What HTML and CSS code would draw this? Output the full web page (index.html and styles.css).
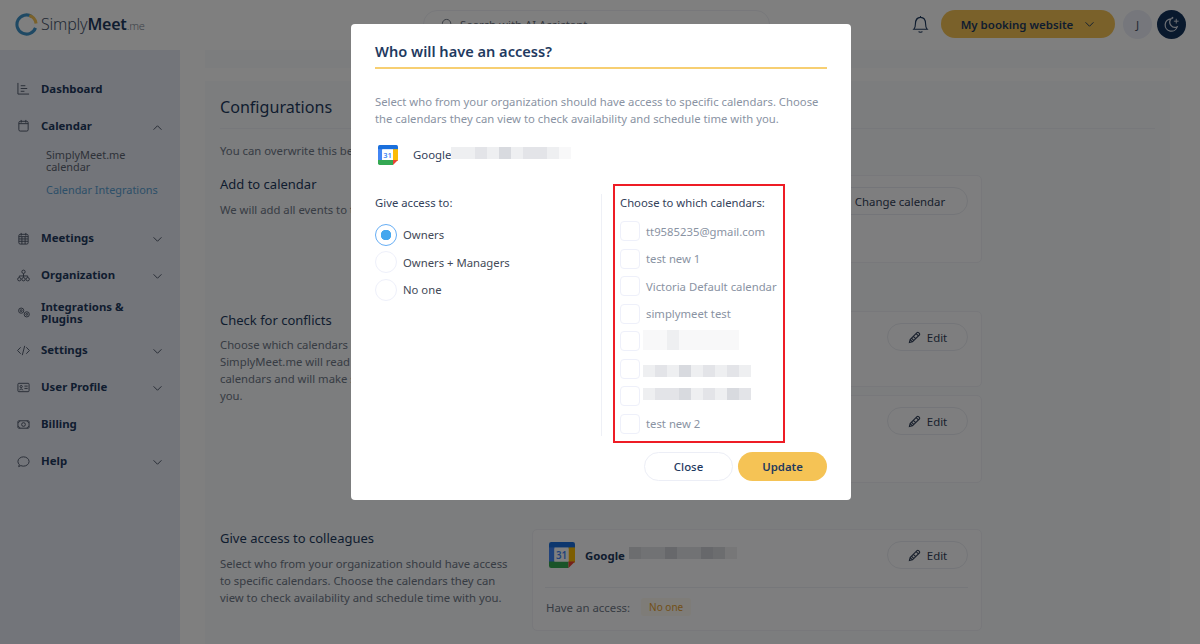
FILE: index.html
```html
<!DOCTYPE html>
<html>
<head>
    <title>SimplyMeet.me</title>
    <meta name="viewport" content="width=device-width, initial-scale=1.0">
    <link rel="stylesheet" href="styles.css">
</head>
<body>
    <svg class="sprite" width="0" height="0">
        <defs>
            <symbol id="gcal" viewBox="0 0 24 24">
                <path d="M2 0h20a2 2 0 0 1 2 2v4H0V2a2 2 0 0 1 2-2z" fill="#1a6fdc"/>
                <rect x="0" y="5" width="5" height="14" fill="#4285f4"/>
                <rect x="18" y="5" width="6" height="14" fill="#fbbc04"/>
                <path d="M0 18h18v6H2a2 2 0 0 1-2-2z" fill="#34a853"/>
                <path d="M18 18h6l-6 6z" fill="#ea4335"/>
                <rect x="5" y="5" width="13" height="13" fill="#fff"/>
                <text x="11.5" y="15.5" text-anchor="middle" class="gcal-day">31</text>
            </symbol>
            <symbol id="chev-down" viewBox="0 0 12 8">
                <path d="M1.5 1.5 6 6l4.5-4.5" fill="none" stroke="currentColor" stroke-width="1.1"/>
            </symbol>
            <symbol id="chev-up" viewBox="0 0 12 8">
                <path d="M1.5 6.5 6 2l4.5 4.5" fill="none" stroke="currentColor" stroke-width="1.1"/>
            </symbol>
            <symbol id="pencil" viewBox="0 0 14 14">
                <path d="M1.500 12.500l.8-3.300 7.400-7.400a1.200 1.200 0 0 1 1.700 0l.8.8a1.200 1.200 0 0 1 0 1.700l-7.400 7.400zM8.800 2.800l2.400 2.400M2.300 9.200l2.500 2.500M4 8l2 2M6 6l2 2" fill="none" stroke="currentColor" stroke-width="1.200"/>
            </symbol>
        </defs>
    </svg>

    <header class="topbar">
        <div class="logo">
            <svg class="logo-mark" viewBox="0 0 24 24" width="23" height="23">
                <path d="M17.500 3.600A10 10 0 1 0 21.400 15.500" fill="none" stroke="#3f93c9" stroke-width="3.200"/>
                <path d="M15 2.600A10 10 0 0 1 22 11" fill="none" stroke="#f5c355" stroke-width="3.200"/>
            </svg>
            <span class="logo-text">Simply<b>Meet</b><small>.me</small></span>
        </div>
        <div class="search">
            <svg viewBox="0 0 14 14" width="13" height="13"><circle cx="6" cy="6" r="4.500" fill="none" stroke="currentColor"/><path d="M9.500 9.500 13 13" stroke="currentColor"/></svg>
            Search with AI Assistant
        </div>
        <div class="topbar-right">
            <svg class="bell" viewBox="0 0 18 20" width="17" height="19">
                <path d="M2 15c1.300-1.200 1.600-2.500 1.600-5.500C3.600 5.500 5.500 2.500 9 2.500s5.400 3 5.400 7c0 3 .3 4.300 1.600 5.500zM9 1v1.500M7 17.500c.5 1 3.500 1 4 0" fill="none" stroke="currentColor" stroke-width="1.200"/>
            </svg>
            <button class="site-btn">My booking website
                <svg width="11" height="7"><use href="#chev-down"/></svg>
            </button>
            <span class="avatar">J</span>
            <span class="moon">
                <svg viewBox="0 0 20 20" width="19" height="19">
                    <path d="M9.500 4a6.500 6.500 0 1 0 6.500 8.500A5.500 5.500 0 0 1 9.500 4z" fill="none" stroke="#d8dde6" stroke-width="1.300"/>
                    <path d="M15 4v5M12.500 6.500h5M11 2v2M10 3h2" stroke="#d8dde6" stroke-width="1"/>
                </svg>
            </span>
        </div>
    </header>

    <div class="layout">
        <nav class="sidebar">
            <a class="nav-item">
                <svg class="nav-icon" viewBox="0 0 14 14"><path d="M1 1v12h12M4 4h5M4 7h7M4 10h4"/></svg>
                <span>Dashboard</span>
            </a>
            <a class="nav-item">
                <svg class="nav-icon" viewBox="0 0 14 14"><rect x="2" y="2.500" width="10" height="10.500" rx="1.500"/><path d="M4.500 1v3M9.500 1v3M2 5h10"/></svg>
                <span>Calendar</span>
                <svg class="chev" width="11" height="7"><use href="#chev-up"/></svg>
            </a>
            <div class="subnav">
                <a>SimplyMeet.me calendar</a>
                <a class="active">Calendar Integrations</a>
            </div>
            <a class="nav-item">
                <svg class="nav-icon" viewBox="0 0 14 14"><rect x="2" y="2.500" width="10" height="10.500" rx="1.500"/><path d="M4.500 1v3M9.500 1v3M2 5h10M2 7.500h10M2 10h10M5.300 5v8M8.700 5v8"/></svg>
                <span>Meetings</span>
                <svg class="chev" width="11" height="7"><use href="#chev-down"/></svg>
            </a>
            <a class="nav-item">
                <svg class="nav-icon" viewBox="0 0 14 14"><circle cx="7" cy="3" r="1.800"/><circle cx="2.500" cy="11" r="1.800"/><circle cx="7" cy="11" r="1.800"/><circle cx="11.500" cy="11" r="1.800"/><path d="M7 5v4M2.500 9V7.500h9V9"/></svg>
                <span>Organization</span>
                <svg class="chev" width="11" height="7"><use href="#chev-down"/></svg>
            </a>
            <a class="nav-item nav-item-tall">
                <svg class="nav-icon" viewBox="0 0 14 14"><circle cx="4.500" cy="5" r="2.800"/><circle cx="4.500" cy="5" r="1"/><circle cx="10.500" cy="9" r="2.800"/><circle cx="10.500" cy="9" r="1"/></svg>
                <span>Integrations &amp; Plugins</span>
            </a>
            <a class="nav-item">
                <svg class="nav-icon" viewBox="0 0 14 14"><path d="M4 3.500.6 7 4 10.500M10 3.500 13.400 7 10 10.500M8.300 2 5.700 12"/></svg>
                <span>Settings</span>
                <svg class="chev" width="11" height="7"><use href="#chev-down"/></svg>
            </a>
            <a class="nav-item">
                <svg class="nav-icon" viewBox="0 0 14 14"><rect x="1" y="2.500" width="12" height="9" rx="1"/><circle cx="4.500" cy="6" r="1.200"/><path d="M2.800 10c.3-2 3.100-2 3.400 0M8 5.500h3.500M8 8h3.500"/></svg>
                <span>User Profile</span>
                <svg class="chev" width="11" height="7"><use href="#chev-down"/></svg>
            </a>
            <a class="nav-item">
                <svg class="nav-icon" viewBox="0 0 14 14"><rect x="1" y="3" width="12" height="8" rx="1"/><circle cx="7" cy="7" r="2"/><path d="M3 3c0 1-.8 2-2 2M11 3c0 1 .8 2 2 2M3 11c0-1-.8-2-2-2M11 11c0-1 .8-2 2-2"/></svg>
                <span>Billing</span>
            </a>
            <a class="nav-item">
                <svg class="nav-icon" viewBox="0 0 14 14"><path d="M2.500 10.300C1.500 9.400 1 8.300 1 7c0-2.800 2.700-5 6-5s6 2.200 6 5-2.700 5-6 5c-1 0-2-.2-2.800-.6L1.800 12.500z"/></svg>
                <span>Help</span>
                <svg class="chev" width="11" height="7"><use href="#chev-down"/></svg>
            </a>
        </nav>

        <main class="content">
            <div class="panel-top"></div>
            <div class="panel">
                <h2 class="panel-title">Configurations</h2>
                <p class="intro">You can overwrite this below</p>

                <section class="config config-add">
                    <div class="config-text">
                        <h3>Add to calendar</h3>
                        <p>We will add all events to this calendar.</p>
                    </div>
                    <div class="config-cards">
                        <div class="card card-add">
                            <button class="pill pill-wide">Change calendar</button>
                        </div>
                    </div>
                </section>

                <section class="config config-check">
                    <div class="config-text">
                        <h3>Check for conflicts</h3>
                        <p>Choose which calendars should be checked.<br>SimplyMeet.me will read availability from these<br>calendars and will make sure not to double book<br>you.</p>
                    </div>
                    <div class="config-cards">
                        <div class="card card-check">
                            <button class="pill"><svg width="13" height="13"><use href="#pencil"/></svg>Edit</button>
                        </div>
                        <div class="card card-check card-check-second">
                            <button class="pill"><svg width="13" height="13"><use href="#pencil"/></svg>Edit</button>
                        </div>
                    </div>
                </section>

                <section class="config">
                    <div class="config-text">
                        <h3>Give access to colleagues</h3>
                        <p>Select who from your organization should have access to specific calendars. Choose the calendars they can view to check availability and schedule time with you.</p>
                    </div>
                    <div class="config-cards">
                        <div class="card card-give">
                            <div class="card-head">
                                <svg class="card-logo" width="26" height="26"><use href="#gcal"/></svg>
                                <strong>Google</strong>
                                <span class="blur blur-card">
                                    <i class="s3"></i><i class="s2"></i><i class="s2"></i><i class="s4"></i><i class="s2"></i><i class="s2"></i><i class="s4"></i><i class="s3"></i><i class="s1"></i>
                                </span>
                                <button class="pill"><svg width="13" height="13"><use href="#pencil"/></svg>Edit</button>
                            </div>
                            <div class="card-foot">
                                Have an access:
                                <span class="tag">No one</span>
                            </div>
                        </div>
                    </div>
                </section>
            </div>
        </main>
    </div>

    <div class="overlay">
        <div class="modal">
            <h2 class="modal-title">Who will have an access?</h2>
            <p class="modal-desc">Select who from your organization should have access to specific calendars. Choose the calendars they can view to check availability and schedule time with you.</p>
            <div class="modal-account">
                <svg width="20" height="20"><use href="#gcal"/></svg>
                <span>Google</span>
                <span class="blur blur-account">
                    <i class="s1"></i><i class="s1"></i><i class="s2"></i><i class="s1"></i><i class="s3"></i><i class="s1"></i><i class="s2"></i><i class="s2"></i><i class="s1"></i><i class="s0"></i>
                </span>
            </div>
            <div class="modal-cols">
                <div class="access-col">
                    <h4>Give access to:</h4>
                    <label class="radio-row"><span class="radio checked"></span>Owners</label>
                    <label class="radio-row"><span class="radio"></span>Owners + Managers</label>
                    <label class="radio-row"><span class="radio"></span>No one</label>
                </div>
                <div class="divider"></div>
                <div class="calendars-col">
                    <h4>Choose to which calendars:</h4>
                    <label class="check-row"><span class="check"></span>tt9585235@gmail.com</label>
                    <label class="check-row"><span class="check"></span>test new 1</label>
                    <label class="check-row"><span class="check"></span>Victoria Default calendar</label>
                    <label class="check-row"><span class="check"></span>simplymeet test</label>
                    <label class="check-row"><span class="check"></span>
                        <span class="blur blur-row blur-faint">
                            <i class="s0"></i><i class="s0"></i><i class="s1"></i><i class="s0"></i><i class="s0"></i><i class="s0"></i><i class="s0"></i><i class="s0"></i>
                        </span>
                    </label>
                    <label class="check-row"><span class="check"></span>
                        <span class="blur blur-row blur-down">
                            <i class="s1"></i><i class="s2"></i><i class="s1"></i><i class="s3"></i><i class="s1"></i><i class="s2"></i><i class="s1"></i><i class="s2"></i><i class="s1"></i>
                        </span>
                    </label>
                    <label class="check-row"><span class="check"></span>
                        <span class="blur blur-row blur-up">
                            <i class="s1"></i><i class="s2"></i><i class="s2"></i><i class="s3"></i><i class="s1"></i><i class="s2"></i><i class="s1"></i><i class="s3"></i><i class="s2"></i>
                        </span>
                    </label>
                    <label class="check-row"><span class="check"></span>test new 2</label>
                </div>
            </div>
            <div class="modal-actions">
                <button class="btn-close">Close</button>
                <button class="btn-update">Update</button>
            </div>
        </div>
    </div>
</body>
</html>
```

FILE: styles.css
```css
* {
    box-sizing: border-box;
    margin: 0;
    padding: 0;
}

html, body {
    height: 644px;
    overflow: hidden;
}

body {
    font-family: "Noto Sans", sans-serif;
    color: #1f3a5f;
    background: #fff;
}

button {
    font-family: inherit;
    cursor: pointer;
}

.sprite {
    display: block;
    height: 0;
}

.gcal-day {
    font-family: "Noto Sans", sans-serif;
    font-size: 9px;
    font-weight: 600;
    fill: #4285f4;
}

/* top bar */
.topbar {
    height: 50px;
    display: flex;
    align-items: center;
    padding: 0 14px 2px 15px;
    background: #fff;
}

.logo {
    display: flex;
    align-items: center;
    gap: 3px;
    width: 408px;
}

.logo-text {
    font-size: 16px;
    font-weight: 300;
    letter-spacing: -0.2px;
    color: #45536a;
}

.logo-text b {
    font-weight: 600;
    color: #1f3a5f;
}

.logo-text small {
    font-size: 11px;
    color: #7d8694;
}

.search {
    width: 347px;
    height: 28px;
    display: flex;
    align-items: center;
    gap: 6px;
    padding-left: 17px;
    border: 1px solid #f0f1f6;
    border-radius: 14px;
    font-size: 11.4px;
    color: #6b7280;
}

.topbar-right {
    margin-left: auto;
    display: flex;
    align-items: center;
}

.bell {
    margin-right: 12px;
    color: #1f3a5f;
}

.site-btn {
    width: 174px;
    height: 28px;
    display: flex;
    align-items: center;
    justify-content: center;
    gap: 11px;
    border: none;
    border-radius: 14px;
    background: #f5c355;
    color: #1f3a5f;
    font-size: 11.5px;
    font-weight: 600;
}

.avatar {
    width: 29px;
    height: 29px;
    margin-left: 8px;
    border-radius: 50%;
    background: #eceff8;
    font-size: 11.5px;
    line-height: 29px;
    text-align: center;
    color: #4b5568;
}

.moon {
    width: 29px;
    height: 29px;
    margin-left: 5px;
    display: flex;
    align-items: center;
    justify-content: center;
    border-radius: 50%;
    background: #12325a;
}

/* page */
.layout {
    display: flex;
    height: 594px;
}

.sidebar {
    width: 180px;
    flex-shrink: 0;
    padding: 20px 17px 0 17px;
    background: #e7eaf4;
}

.nav-item {
    height: 37px;
    display: flex;
    align-items: center;
    gap: 11px;
    font-size: 11.4px;
    font-weight: 700;
    line-height: 11.5px;
    color: #1f3a5f;
}

.nav-item-tall {
    height: 38px;
}

.nav-icon {
    width: 13px;
    height: 13px;
    flex-shrink: 0;
    fill: none;
    stroke: #4b5568;
    stroke-width: 1;
}

.chev {
    margin: 3px 0 0 auto;
    color: #4b5568;
}

.subnav {
    padding: 5px 0 12px 29px;
    font-size: 10.9px;
    line-height: 11.5px;
    color: #5c6573;
}

.subnav a {
    display: block;
    width: 100px;
    margin-bottom: 12px;
}

.subnav .active {
    width: auto;
    color: #5aa0d2;
    white-space: nowrap;
}

.content {
    flex: 1;
    padding: 0 30px 0 25px;
    overflow: hidden;
}

.panel-top {
    height: 18px;
    margin-bottom: 13px;
    background: #f8fafd;
}

.panel {
    height: 600px;
    padding: 14px 15px 0 15px;
    background: #f8fafd;
}

.panel-title {
    padding-bottom: 9px;
    border-bottom: 1px solid #eef0f6;
    font-size: 16.1px;
    font-weight: 400;
    line-height: 24px;
    color: #1f3a5f;
}

.intro {
    margin-top: 13px;
    font-size: 11.3px;
    line-height: 17px;
    color: #6f7887;
}

.config {
    display: flex;
}

.config-add {
    margin-top: 16px;
    height: 136px;
}

.config-check {
    height: 218px;
}

.config-text {
    width: 312px;
    flex-shrink: 0;
}

.config-text h3 {
    font-size: 13px;
    font-weight: 400;
    line-height: 19px;
    color: #1f3a5f;
}

.config-text p {
    width: 295px;
    margin-top: 7px;
    font-size: 11.3px;
    line-height: 17px;
    color: #6f7887;
}

.config-check .config-text p {
    margin-top: 6px;
}

.config-cards {
    width: 450px;
    display: flex;
    flex-direction: column;
    gap: 8px;
}

.card {
    padding: 11px 13px;
    border: 1px solid #f0f1f6;
    border-radius: 5px;
    background: #fdfdfe;
}

.card-add {
    height: 88px;
    display: flex;
    justify-content: flex-end;
}

.card-check {
    height: 76px;
    display: flex;
    justify-content: flex-end;
}

.card-check-second {
    height: 88px;
}

.card-give {
    height: 102px;
    padding: 11px 13px 0 12px;
}

.pill {
    width: 81px;
    height: 28px;
    display: inline-flex;
    align-items: center;
    justify-content: center;
    gap: 6px;
    border: 1px solid #e9ebf2;
    border-radius: 15px;
    background: transparent;
    color: #33415a;
    font-size: 11.4px;
}

.pill-wide {
    width: 136px;
}

.card-head {
    display: flex;
    align-items: center;
    padding-bottom: 18px;
    border-bottom: 1px solid #eceef4;
}

.card-head strong {
    margin-left: 10px;
    font-size: 11.4px;
    font-weight: 700;
}

.card-head .pill {
    margin-left: auto;
}

.card-logo {
    flex-shrink: 0;
    margin-left: 4px;
}

.card-foot {
    display: flex;
    align-items: center;
    gap: 11px;
    margin: 10px 0 0 1px;
    font-size: 11.4px;
    color: #6f7887;
}

.tag {
    padding: 2px 8px;
    border-radius: 3px;
    background: #fcf9f0;
    color: #e6a030;
    font-size: 10px;
}

/* blurred-out names */
.blur {
    display: inline-flex;
}

.blur i {
    display: block;
    width: 12px;
    height: 100%;
}

.s0 { background: #f8f8f9; }
.s1 { background: #eeeff1; }
.s2 { background: #e3e4e8; }
.s3 { background: #d8dadf; }
.s4 { background: #cfd1d6; }

.blur-card {
    height: 12px;
    margin: -4px 0 0 4px;
}

.blur-account {
    height: 12px;
    margin: -4px 0 0 0;
}

.blur-row {
    height: 12px;
    margin-left: -3px;
}

.blur-faint {
    height: 20px;
    margin-top: -3px;
}

.blur-down {
    margin-top: 4px;
}

.blur-up {
    margin-top: -4px;
}

/* modal */
.overlay {
    position: fixed;
    inset: 0;
    display: flex;
    justify-content: center;
    align-items: flex-start;
    padding-top: 24px;
    background: rgba(0, 0, 0, 0.5);
}

.modal {
    width: 500px;
    height: 476px;
    margin-left: 2px;
    padding: 17px 24px 0;
    border-radius: 4px;
    background: #fff;
}

.modal-title {
    height: 28px;
    border-bottom: 2px solid #f7cf72;
    font-size: 14.6px;
    font-weight: 600;
    line-height: 21px;
    color: #1f3a5f;
}

.modal-desc {
    margin-top: 24px;
    font-size: 11.3px;
    line-height: 17px;
    color: #8a93a3;
}

.modal-account {
    display: flex;
    align-items: center;
    height: 21px;
    margin: 17px 0 0 3px;
    font-size: 11.4px;
    color: #33415a;
}

.modal-account span:first-of-type {
    margin-left: 15px;
}

.modal-cols {
    display: flex;
    margin-top: 19px;
}

.access-col {
    width: 226px;
    padding-top: 9.5px;
}

.modal h4 {
    font-size: 11.3px;
    font-weight: 400;
    line-height: 17px;
    color: #33415a;
}

.radio-row {
    height: 27.5px;
    display: flex;
    align-items: center;
    gap: 6px;
    font-size: 11.3px;
    color: #434a57;
}

.access-col h4 {
    margin-bottom: 10.5px;
}

.radio {
    width: 22px;
    height: 22px;
    border: 1px solid #eef0fa;
    border-radius: 50%;
}

.radio.checked {
    border-color: #66aef5;
    background: radial-gradient(circle, #45a7ee 0 5px, #fff 5.5px);
}

.divider {
    width: 1px;
    height: 242px;
    margin-top: 10px;
    background: #eef0f6;
}

.calendars-col {
    width: 172px;
    height: 259px;
    margin-left: 11px;
    padding: 7.5px 0 0 5px;
    border: 2px solid #ee1c25;
}

.calendars-col h4 {
    margin-bottom: 7px;
    white-space: nowrap;
}

.check-row {
    height: 27.5px;
    display: flex;
    align-items: center;
    gap: 6px;
    font-size: 11.3px;
    color: #8a93a3;
    white-space: nowrap;
}

.check {
    width: 20px;
    height: 20px;
    flex-shrink: 0;
    border: 1px solid #eef0fa;
    border-radius: 4px;
}

.modal-actions {
    display: flex;
    justify-content: flex-end;
    gap: 5px;
    margin-top: 9px;
}

.modal-actions button {
    width: 89px;
    height: 29px;
    border-radius: 15px;
    font-size: 11.4px;
    font-weight: 500;
    color: #1f3a5f;
}

.btn-close {
    border: 1px solid #eceef6;
    background: #fff;
}

.modal-actions .btn-update {
    border: none;
    background: #f5c355;
    font-weight: 600;
}
```
